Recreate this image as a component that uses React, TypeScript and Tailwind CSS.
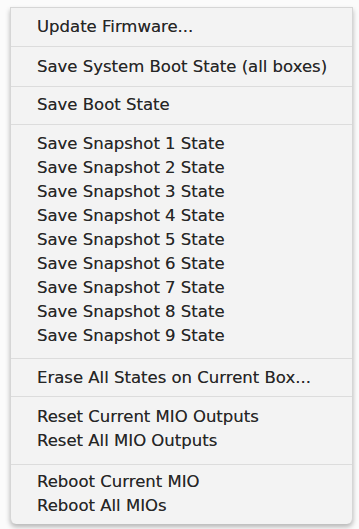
type Section = { items: string[]; pt: string; pb: string };

const sections: Section[] = [
  { items: ["Update Firmware..."], pt: "pt-[7px]", pb: "pb-[7px]" },
  { items: ["Save System Boot State (all boxes)"], pt: "pt-[8px]", pb: "pb-[7px]" },
  { items: ["Save Boot State"], pt: "pt-[6px]", pb: "pb-[7px]" },
  {
    items: [1, 2, 3, 4, 5, 6, 7, 8, 9].map((n) => `Save Snapshot ${n} State`),
    pt: "pt-[7px]",
    pb: "pb-[10px]",
  },
  { items: ["Erase All States on Current Box..."], pt: "pt-[7px]", pb: "pb-[6px]" },
  { items: ["Reset Current MIO Outputs", "Reset All MIO Outputs"], pt: "pt-[8px]", pb: "pb-[11px]" },
  { items: ["Reboot Current MIO", "Reboot All MIOs"], pt: "pt-[5px]", pb: "pb-[6px]" },
];

export default function App() {
  return (
    <div className="min-h-screen w-[359px] bg-[#fbfbfb] pl-[10px] pt-[7px] font-['DejaVu_Sans',sans-serif]">
      {/* Menu panel */}
      <div className="w-[343px] bg-[#f3f3f3] border-x border-t border-[#d6d6d6] rounded-b-[6px] shadow-[0_3px_5px_rgba(0,0,0,0.28)] flex flex-col divide-y divide-[#dcdcdc]">
        {sections.map((s, i) => (
          <div key={i} className={`flex flex-col ${s.pt} ${s.pb}`}>
            {s.items.map((label) => (
              <div
                key={label}
                className="pl-[26px] text-[16.5px] leading-[24px] text-[#262626] whitespace-nowrap [text-shadow:0_0_0.6px_rgba(0,0,0,0.45)]"
              >
                {label}
              </div>
            ))}
          </div>
        ))}
      </div>
    </div>
  );
}
